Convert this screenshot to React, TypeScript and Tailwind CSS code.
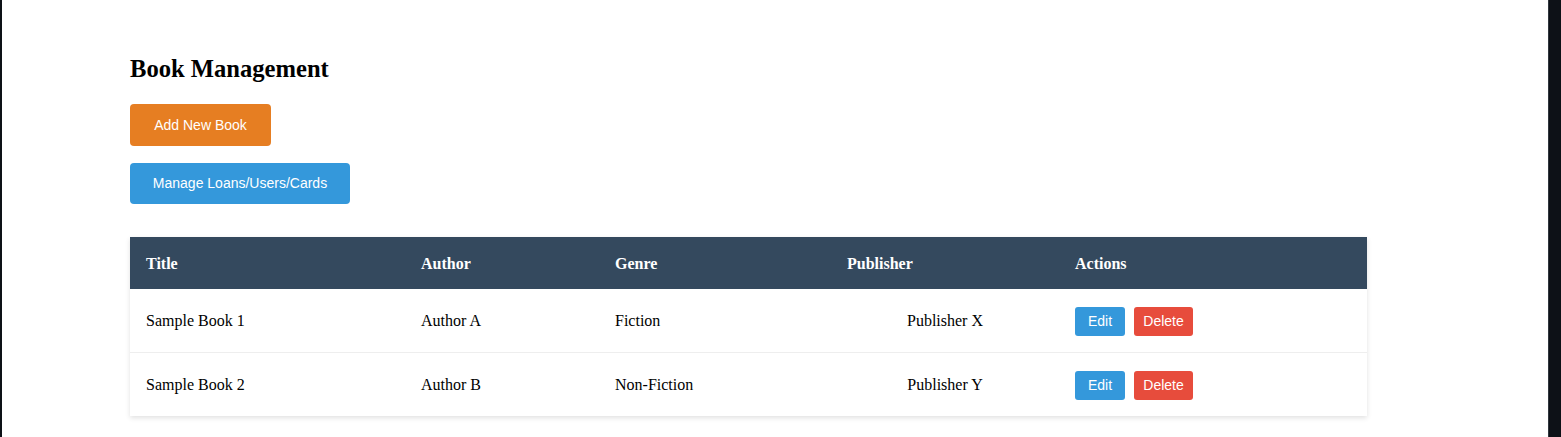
import React from "react";

const rows = [
  { title: "Sample Book 1", author: "Author A", genre: "Fiction", publisher: "Publisher X" },
  { title: "Sample Book 2", author: "Author B", genre: "Non-Fiction", publisher: "Publisher Y" },
];

export default function App() {
  return (
    <div className="flex h-screen w-full overflow-hidden bg-white">
      <div className="w-[2px] shrink-0 bg-[#0d1117]" />
      <div className="flex-1 bg-white pl-[128px] pt-[55px] font-['Liberation_Serif',serif] text-black">
        <h2 className="h-[28px] text-[24.6px] font-bold leading-[28px]">Book Management</h2>
        <div className="mt-[21px] flex flex-col items-start gap-[17px] font-['Liberation_Sans',Arial,sans-serif]">
          <button className="h-[42px] w-[141px] rounded-[4px] bg-[#e67e22] text-[14px] text-white">
            Add New Book
          </button>
          <button className="h-[41px] w-[220px] rounded-[4px] bg-[#3498db] text-[14px] text-white">
            Manage Loans/Users/Cards
          </button>
        </div>
        <div className="mt-[33px] w-[1237px] bg-white shadow-[0_2px_5px_rgba(0,0,0,0.12)]">
          <div className="grid h-[52px] grid-cols-[275px_194px_232px_228px_308px] items-center bg-[#34495e] pt-[1px] text-[16px] font-bold text-white">
            <div className="px-4">Title</div>
            <div className="px-4">Author</div>
            <div className="px-4">Genre</div>
            <div className="px-4">Publisher</div>
            <div className="px-4">Actions</div>
          </div>
          {rows.map((r, i) => (
            <div
              key={r.title}
              className={
                i === 0
                  ? "grid h-[64px] grid-cols-[275px_194px_232px_228px_308px] items-center border-b border-[#eeeeee] pt-[1px] text-[16px]"
                  : "grid h-[63px] grid-cols-[275px_194px_232px_228px_308px] items-center pt-[1px] text-[16px]"
              }
            >
              <div className="px-4">{r.title}</div>
              <div className="px-4">{r.author}</div>
              <div className="px-4">{r.genre}</div>
              <div className="px-4 text-center">{r.publisher}</div>
              <div className="flex items-center gap-[9px] px-4 font-['Liberation_Sans',Arial,sans-serif]">
                <button className="h-[29px] w-[50px] rounded-[3px] bg-[#3498db] text-[14px] text-white">Edit</button>
                <button className="h-[29px] w-[59px] rounded-[3px] bg-[#e74c3c] text-[14px] text-white">Delete</button>
              </div>
            </div>
          ))}
        </div>
      </div>
      <div className="w-px shrink-0 bg-[#30363d]" />
      <div className="w-[12px] shrink-0 bg-[#0d1117]" />
    </div>
  );
}
